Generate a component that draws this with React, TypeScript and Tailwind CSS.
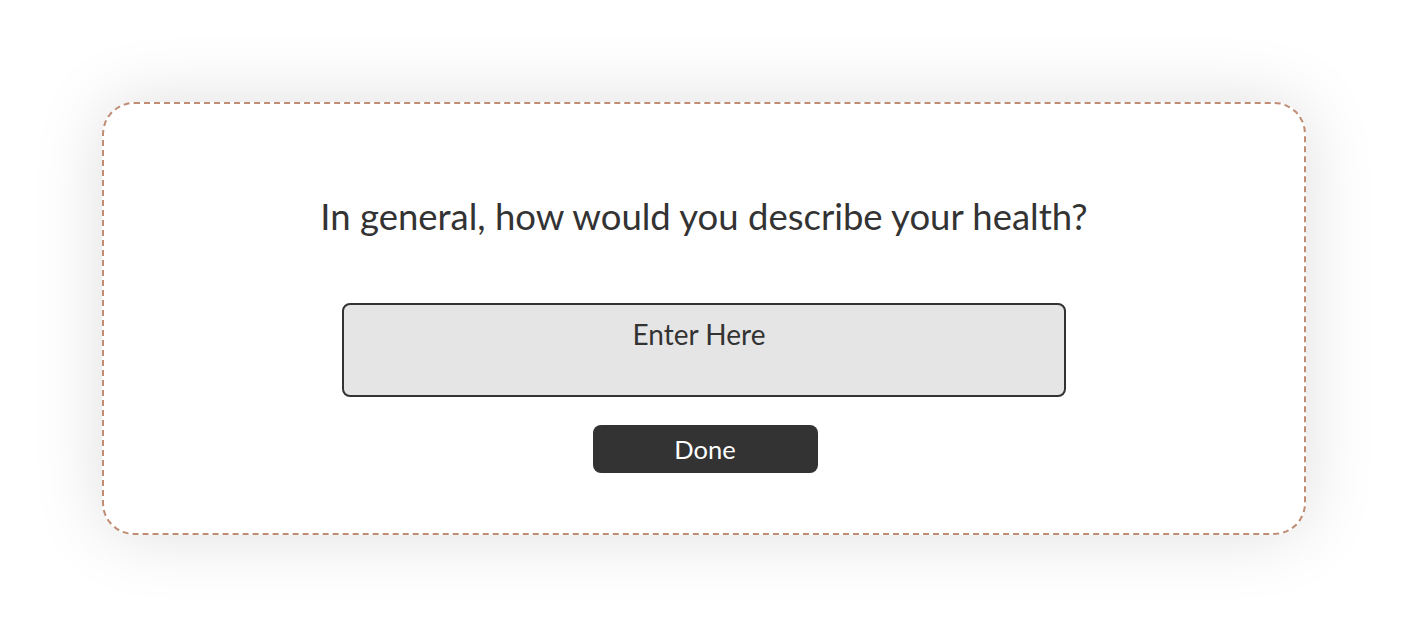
import React from "react";

export default function App() {
  return (
    <div className="w-full h-[638px] bg-white flex items-center justify-center" style={{ fontFamily: "Lato, 'Noto Sans', sans-serif" }}>
      <div className="w-[1204px] h-[433px] mt-[-2px] rounded-[32px] border-2 border-dashed border-[#c08c74] bg-white shadow-[0_0_70px_rgba(0,0,0,0.13)] flex flex-col items-center pt-[91px]">
        <h1 className="text-[36.5px] leading-[43px] text-[#333333] font-normal">
          In general, how would you describe your health?
        </h1>
        <div className="mt-[65px] w-[724px] h-[94px] rounded-[8px] border-2 border-[#333333] bg-[#e5e5e5] flex justify-center pt-[11px] pr-[10px]">
          <span className="text-[28px] leading-[36px] text-[#333333]">Enter Here</span>
        </div>
        <button className="mt-[28px] ml-[2px] w-[225px] h-[48px] rounded-[8px] bg-[#333333] text-white text-[25.5px] leading-[46px]">
          Done
        </button>
      </div>
    </div>
  );
}
